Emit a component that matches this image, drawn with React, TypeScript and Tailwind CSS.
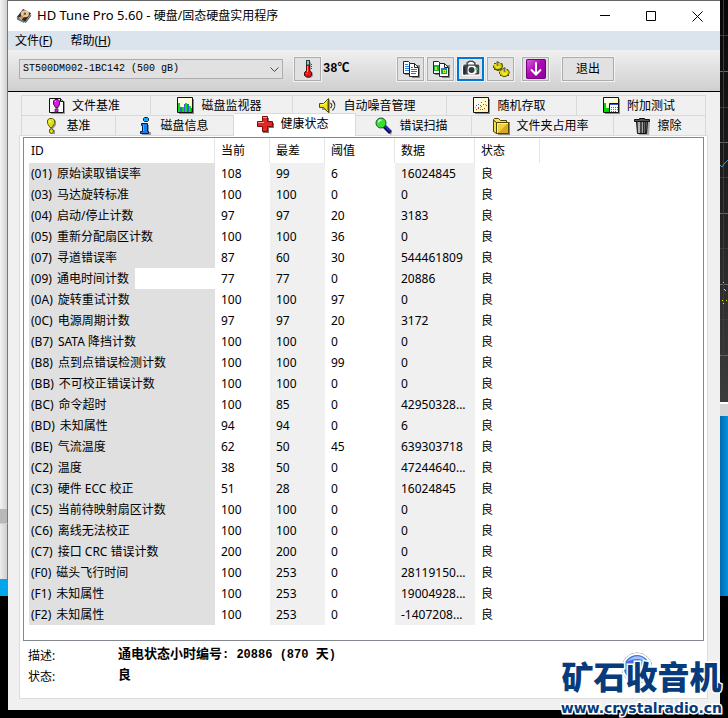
import type { ReactNode } from 'react';
import clsx from 'clsx';

type Attribute = {
  id: string;
  name: string;
  current: number;
  worst: number;
  threshold: number;
  data: string;
};

const attributes: Attribute[] = [
  { id: '01', name: '原始读取错误率', current: 108, worst: 99, threshold: 6, data: '16024845' },
  { id: '03', name: '马达旋转标准', current: 100, worst: 100, threshold: 0, data: '0' },
  { id: '04', name: '启动/停止计数', current: 97, worst: 97, threshold: 20, data: '3183' },
  { id: '05', name: '重新分配扇区计数', current: 100, worst: 100, threshold: 36, data: '0' },
  { id: '07', name: '寻道错误率', current: 87, worst: 60, threshold: 30, data: '544461809' },
  { id: '09', name: '通电时间计数', current: 77, worst: 77, threshold: 0, data: '20886' },
  { id: '0A', name: '旋转重试计数', current: 100, worst: 100, threshold: 97, data: '0' },
  { id: '0C', name: '电源周期计数', current: 97, worst: 97, threshold: 20, data: '3172' },
  { id: 'B7', name: 'SATA 降挡计数', current: 100, worst: 100, threshold: 0, data: '0' },
  { id: 'B8', name: '点到点错误检测计数', current: 100, worst: 100, threshold: 99, data: '0' },
  { id: 'BB', name: '不可校正错误计数', current: 100, worst: 100, threshold: 0, data: '0' },
  { id: 'BC', name: '命令超时', current: 100, worst: 85, threshold: 0, data: '42950328...' },
  { id: 'BD', name: '未知属性', current: 94, worst: 94, threshold: 0, data: '6' },
  { id: 'BE', name: '气流温度', current: 62, worst: 50, threshold: 45, data: '639303718' },
  { id: 'C2', name: '温度', current: 38, worst: 50, threshold: 0, data: '47244640...' },
  { id: 'C3', name: '硬件 ECC 校正', current: 51, worst: 28, threshold: 0, data: '16024845' },
  { id: 'C5', name: '当前待映射扇区计数', current: 100, worst: 100, threshold: 0, data: '0' },
  { id: 'C6', name: '离线无法校正', current: 100, worst: 100, threshold: 0, data: '0' },
  { id: 'C7', name: '接口 CRC 错误计数', current: 200, worst: 200, threshold: 0, data: '0' },
  { id: 'F0', name: '磁头飞行时间', current: 100, worst: 253, threshold: 0, data: '28119150...' },
  { id: 'F1', name: '未知属性', current: 100, worst: 253, threshold: 0, data: '19004928...' },
  { id: 'F2', name: '未知属性', current: 100, worst: 253, threshold: 0, data: '-1407208...' },
];

const selectedId = '09';

const Icon = ({ children, size = 18 }: { children: ReactNode; size?: number }) => (
  <svg width={size} height={size} viewBox="0 0 18 18" className="shrink-0" aria-hidden="true">
    {children}
  </svg>
);

const DiskIcon = () => (
  <Icon size={16}>
    <path d="M1 10 8 1l9 5-7 10z" fill="#2c2a28" />
    <path d="M1 10v3l8 4 1-2z" fill="#777" />
    <path d="m10 16 7-9v2l-6 8z" fill="#555" />
    <ellipse cx="10" cy="6.5" rx="4.6" ry="4" fill="#e5c79b" />
    <circle cx="10" cy="6.5" r="1.4" fill="#80532a" />
    <path d="m4 10 5-2-3 5z" fill="#e78b23" />
    <path d="m3 10 3 3 3-4" stroke="#ddd" fill="none" />
  </Icon>
);

const ThermometerIcon = () => (
  <Icon>
    <path d="M8 2h4v9l2 2v3l-2 2H8z" fill="#999" />
    <path d="M7.500.5h3v10l2 2v3l-2 1.500h-3l-2-1.500v-3l2-2z" fill="#e81212" stroke="#3a1010" />
    <path d="M7.500.5h3V5h-3z" fill="#5fd9e9" stroke="#333" />
    <path d="M8.500 6v6M7.500 13.500h1" stroke="#ff8d82" />
    <path d="M12 4.500h1M12 6.500h1M12 8.500h1" stroke="#444" />
  </Icon>
);

const CopyTextIcon = () => (
  <Icon>
    <path d="M3 3h6v12H3zM10 5h8v13h-8z" fill="#888" />
    <path d="M1.500 1.500h5l2 2v10h-7z" fill="#fff" stroke="#222" />
    <path d="M3 4.500h3M3 6.500h4M3 8.500h4M3 10.500h4" stroke="#2f80dc" />
    <path d="M7.500 3.500h5l4 4v9h-9z" fill="#fff" stroke="#222" />
    <path d="M12.500 3.500v4h4" fill="none" stroke="#222" />
    <path d="M9 7.500h2M9 9.500h6M9 11.500h6M9 13.500h5" stroke="#2374da" />
  </Icon>
);

const CopyImageIcon = () => (
  <Icon>
    <path d="M3 3h6v12H3zM10 5h8v13h-8z" fill="#888" />
    <path d="M1.500 1.500h5l2 2v10h-7z" fill="#fff" stroke="#222" />
    <path d="M2 5h5v6H2z" fill="#18b33a" />
    <path d="M3 7h2v3H3z" fill="#d9df20" />
    <path d="M7.500 3.500h5l4 4v9h-9z" fill="#fff" stroke="#222" />
    <path d="M12.500 3.500v4h4" fill="none" stroke="#222" />
    <path d="M9 8h6v6H9z" fill="#10a936" />
    <path d="M9 8h6v1H9z" fill="#2d7bd2" />
    <path d="M11 10h3v3h-3z" fill="#dce222" />
    <path d="M12 11h1v1h-1z" fill="#e84b20" />
  </Icon>
);

const CameraIcon = () => (
  <Icon size={20}>
    <path d="m1 5 4-1 2-3h5l2 3 3 1v10H1z" fill="#fff" />
    <path d="M5.500 5.500V3.500l2-1.500h3l2 1.500v2" fill="none" stroke="#495159" strokeWidth="1.500" />
    <rect x="2" y="5" width="14.500" height="9" rx="1" fill="#41494f" />
    <path d="M2 7h2v7H2z" fill="#23292e" />
    <path d="M7 6h5l2 2v4l-2 2H7l-1-2V8z" fill="#fff" />
    <circle cx="9.500" cy="10" r="2.700" fill="#333b42" />
    <path d="M13 8h2v2h-2z" fill="#20df36" />
  </Icon>
);

const GearsIcon = () => (
  <Icon>
    <path d="m1 6 1-1V3h2l1-1h2l1 1h2l1 2v2l-1 1v2H8l-1 1H5l-1-1H2V8H1z" fill="#5b5700" />
    <path d="M2 4h2V3h4l1 1 1 2-1 2-2 1H4L2 7z" fill="#d4cd0b" />
    <path d="m7 12 1-1V9h2l1-1h2l1 1h2l1 2 1 1-1 2v2h-2l-1 1h-3l-1-1H8v-2H7z" fill="#5b5700" />
    <path d="m8 11 2-1 1-1h3l2 2 1 1-1 2-2 2h-3l-3-2z" fill="#ded814" />
    <path d="M5.500 1v5M12.500 7v5" stroke="#77756b" strokeWidth="1.600" />
    <path d="M3 5h1M4 7h4M10 12h1M11 14h4" stroke="#fff66f" />
  </Icon>
);

const SaveIcon = () => (
  <Icon size={20}>
    <defs>
      <linearGradient id="save" x1="0" y1="0" x2="1" y2="1">
        <stop offset="0" stopColor="#d86adf" />
        <stop offset=".45" stopColor="#ae08b5" />
        <stop offset="1" stopColor="#8d0098" />
      </linearGradient>
    </defs>
    <rect x=".5" y=".5" width="17" height="17" rx="1" fill="url(#save)" stroke="#760080" />
    <path d="M9 3v11M4.500 9.500 9 14l4.500-4.500" fill="none" stroke="#fff" strokeWidth="1.800" />
  </Icon>
);

const FileBenchmarkIcon = () => (
  <Icon>
    <path d="M3 4h13l1 1v12H3z" fill="#999" />
    <path d="M1.500 1.500h11l3 3v11h-14z" fill="#f8f8f8" stroke="#111" />
    <path d="M12.500 1.500v3h3" fill="#bbb" stroke="#111" />
    <path d="M7 4h5v4l-2 4H8z" fill="#999" />
    <path d="M5.500 4 7 2.500h3L11.500 4v3L9.500 10.500h-2L5.500 7z" fill="#d81be2" stroke="#4b0f50" />
    <path d="M7 4.500h1" stroke="#ffb9ff" />
    <path d="M7 12h3v3H7z" fill="#d81be2" stroke="#4b0f50" strokeWidth=".7" />
  </Icon>
);

const MonitorIcon = () => (
  <Icon>
    <defs>
      <linearGradient id="paper" x1="0" y1="0" x2="1" y2="1">
        <stop offset="0" stopColor="#fff" />
        <stop offset="1" stopColor="#fff9a0" />
      </linearGradient>
    </defs>
    <path d="M2 2h15v15H2z" fill="#888" />
    <path d="M.5.5h15v15H.5z" fill="url(#paper)" stroke="#111" />
    <path d="M1 6h2v9H1zM5 10h2v5H5zM8 6h2v9H8zM12 9h2v6h-2z" fill="#08df08" />
    <path d="M3 10h2v5H3zM7 7h1v8H7zM10 7h2v8h-2zM14 11h1v4h-1z" fill="#3c5ae8" />
  </Icon>
);

const SpeakerIcon = () => (
  <Icon>
    <path d="M3 7h3l5-5v15l-5-4H3z" fill="#999" />
    <path d="M.5 6.500h4l5-5v14l-5-5h-4z" fill="#f4e313" stroke="#554d00" />
    <path d="M2 7.500h3l3-3" stroke="#fff9a8" fill="none" />
    <path d="M8.500 4v9" stroke="#ac9c00" />
    <path d="M11.500 6c2 2 2 3 0 5M13.500 3.500c3 3 3 7 0 10" fill="none" stroke="#333" strokeWidth="1.200" />
  </Icon>
);

const RandomIcon = () => (
  <Icon>
    <path d="M2 2h15v15H2z" fill="#888" />
    <path d="M.5.5h15v15H.5z" fill="url(#paper)" stroke="#111" />
    <path d="M3 8h1v1H3zm2-1h1v1H5zm2 1h1v1H7zm1-3h1v1H8zm2 2h1v1h-1zm2-3h1v1h-1zm-7 6h1v1H5z" fill="#3459e8" />
    <path d="M3 12h1v1H3zm2-1h1v1H5zm2 1h1v1H7zm1-3h1v1H8zm3 2h1v1h-1zm2-3h1v1h-1zM9 12h1v1H9z" fill="#ed3030" />
    <path d="M2 10h1v1H2zm5 0h1v1H7zm5-3h1v1h-1z" fill="#edae20" />
  </Icon>
);

const ExtraIcon = () => (
  <Icon>
    <path d="M2 2h15v15H2z" fill="#888" />
    <path d="M.5.5h15v15H.5z" fill="url(#paper)" stroke="#111" />
    <path d="M1 6h2v9H1zM3 11h3v4H3z" fill="#00d400" />
    <path d="M6.500 6.500h9v9h-9z" fill="#fff" stroke="#111" />
    <path d="M7 7h8v1H7z" fill="#355be0" />
    <path d="M8 10h1v1H8zm2 0h1v1h-1zm2 0h1v1h-1zm-4 2h1v1H8zm4 0h1v1h-1zm2 0h1v1h-1zm-4 2h1v1h-1zm2 0h1v1h-1z" fill="#e03044" />
    <path d="M10 12h1v1h-1zm4-2h1v1h-1zm-6 4h1v1H8z" fill="#4059dc" />
  </Icon>
);

const BenchmarkIcon = () => (
  <Icon>
    <path d="m8 3 4-1 2 2v4l-3 4H8zM9 13h4v4H8z" fill="#999" />
    <path d="m5.500 3 2-1.500h3l2 1.500v3.500l-2.500 4H8L5.500 6.500z" fill="#dce014" stroke="#5f6000" />
    <path d="m7.500 12.500 2-.5 2 1v2l-2 1.500-2-1z" fill="#dce014" stroke="#5f6000" />
    <path d="M7 4.500h2" stroke="#ffffb5" strokeWidth="1.500" />
  </Icon>
);

const InfoIcon = () => (
  <Icon>
    <path d="M7 8h6v7h2v3H6v-2h2z" fill="#999" />
    <path d="M5.500 6.500h6v8h1v2h-8v-2h2v-6h-1z" fill="#1480ef" stroke="#061e46" />
    <path d="m7.500 1.500 1-1h3l1 1v2l-1 1h-3l-1-1z" fill="#1aa9f0" stroke="#061e46" />
    <path d="M7.500 8v6" stroke="#42b4ff" />
  </Icon>
);

const HealthIcon = () => (
  <Icon>
    <path d="M7 3h6v5h5v5h-5v5H7z" fill="#777" />
    <path d="M6.500 1.500h5v5h5v5h-5v5h-5v-5h-5v-5h5z" fill="#df2927" stroke="#7d0909" />
    <path d="M7 2.500h4M2 7.500h6" stroke="#ff9b8e" />
  </Icon>
);

const ScanIcon = () => (
  <Icon>
    <path d="m10 9 7 6-1 3-7-7z" fill="#888" />
    <path d="m9 9 6.500 6.500" stroke="#061052" strokeWidth="4" />
    <path d="m10 9 5 5" stroke="#2529cf" strokeWidth="1.800" />
    <circle cx="6" cy="6" r="5" fill="#36df32" stroke="#185c28" />
    <path d="M3.500 5.500c0-2 1.500-2.500 3-2.500" fill="none" stroke="#c7ffc2" strokeWidth="1.500" />
  </Icon>
);

const FolderIcon = () => (
  <Icon>
    <path d="M6 5h12v13H6z" fill="#888" />
    <path d="M1.500 14.500v-12l1-1h4l2 2h6v3" fill="#f5e563" stroke="#4e4300" />
    <path d="m1.500 3 3 2.500v11l-3-2z" fill="#f2df4e" stroke="#4e4300" />
    <path d="M4.500 5.500h12v11h-12z" fill="#d9ac1d" stroke="#4e4300" />
    <path d="M6 7h9l-8 8H6z" fill="#f0d143" />
    <path d="M5 6.500h11M5.500 7v9" stroke="#fff18d" />
  </Icon>
);

const TrashIcon = () => (
  <Icon>
    <path d="M5 5h12l-1 13H6z" fill="#aaa" />
    <path d="M3.500 4.500h11l-1 12h-9z" fill="#666" stroke="#111" />
    <path d="M6 5v11" stroke="#ccc" strokeWidth="1.500" />
    <path d="M8 5v11M10.500 5v11M12.500 5v11" stroke="#292929" />
    <path d="M9.500 5v11" stroke="#aaa" />
    <path d="M1.500 4.500v-2h5v-1h5v1h5v2z" fill="#555" stroke="#111" />
  </Icon>
);

const fileTabs = [
  { label: '文件基准', icon: FileBenchmarkIcon },
  { label: '磁盘监视器', icon: MonitorIcon },
  { label: '自动噪音管理', icon: SpeakerIcon },
  { label: '随机存取', icon: RandomIcon },
  { label: '附加测试', icon: ExtraIcon },
];

const mainTabs = [
  { label: '基准', icon: BenchmarkIcon },
  { label: '磁盘信息', icon: InfoIcon },
  { label: '健康状态', icon: HealthIcon, active: true },
  { label: '错误扫描', icon: ScanIcon },
  { label: '文件夹占用率', icon: FolderIcon },
  { label: '擦除', icon: TrashIcon },
];

const Tab = ({ label, icon: TabIcon, active }: { label: string; icon: () => ReactNode; active?: boolean }) => (
  <button
    type="button"
    role="tab"
    aria-selected={!!active}
    className={clsx(
      'flex items-center justify-center gap-1.5 border-t border-r border-[#d9d9d9] pr-1 whitespace-nowrap',
      active ? 'relative -mt-0.5 -mb-px bg-white pb-0.5' : 'bg-[#f0f0f0]',
    )}
  >
    <TabIcon />
    {label}
  </button>
);

const ToolButton = ({ label, active, children }: { label: string; active?: boolean; children: ReactNode }) => (
  <button
    type="button"
    aria-label={label}
    className={clsx(
      'flex h-6 w-[27px] items-center justify-center bg-[#e1e1e1] outline outline-[#f2f2f2]',
      active ? 'border-2 border-[#0078d7]' : 'border border-[#adadad]',
    )}
  >
    {children}
  </button>
);

const TitleBar = () => (
  <header className="flex h-[30px] items-center bg-white pl-2">
    <DiskIcon />
    <h1 className="ml-[5px] flex-1">
      <span className="text-[13px]">HD Tune Pro 5.60 - </span>
      硬盘/固态硬盘实用程序
    </h1>
    <button type="button" aria-label="最小化" className="flex w-[46px] justify-center">
      <svg width="11" height="11" viewBox="0 0 11 11" stroke="#000" fill="none"><path d="M0 4.500h10" /></svg>
    </button>
    <button type="button" aria-label="最大化" className="flex w-[46px] justify-center">
      <svg width="11" height="11" viewBox="0 0 11 11" stroke="#000" fill="none"><path d="M.5.5h9v9h-9z" /></svg>
    </button>
    <button type="button" aria-label="关闭" className="flex w-[46px] justify-center">
      <svg width="11" height="11" viewBox="0 0 11 11" stroke="#000" fill="none"><path d="m.5.5 10 10m0-10-10 10" /></svg>
    </button>
  </header>
);

const Toolbar = () => (
  <div className="flex h-[42px] items-center border-b border-black bg-linear-to-b from-[#f0f0f0] to-[#cfcfcf] pr-3 pb-1 pl-[11px]">
    <div className="relative w-[264px]">
      <select
        aria-label="硬盘"
        className="block h-5 w-full appearance-none border border-[#adadad] bg-[#e1e1e1] px-[3px] font-['Liberation_Mono',monospace] text-[10px] leading-4"
      >
        <option>ST500DM002-1BC142 (500 gB)</option>
      </select>
      <svg width="9" height="6" viewBox="0 0 9 6" className="pointer-events-none absolute top-2 right-1" fill="none" stroke="#444">
        <path d="m.5.5 4 4 4-4" />
      </svg>
    </div>
    <div className="ml-[11px] flex w-[103px] items-center gap-0.5">
      <ToolButton label="温度"><ThermometerIcon /></ToolButton>
      <span className="font-['Liberation_Mono','Noto_Sans_CJK_SC',monospace] font-bold">38℃</span>
    </div>
    <div className="flex gap-[3px]">
      <ToolButton label="复制文本"><CopyTextIcon /></ToolButton>
      <ToolButton label="复制图像"><CopyImageIcon /></ToolButton>
      <ToolButton label="截图" active><CameraIcon /></ToolButton>
      <ToolButton label="选项"><GearsIcon /></ToolButton>
    </div>
    <div className="ml-2 flex gap-[13px]">
      <ToolButton label="保存"><SaveIcon /></ToolButton>
      <button type="button" className="h-6 w-[52px] border border-[#adadad] bg-[#e1e1e1] outline outline-[#f2f2f2]">
        退出
      </button>
    </div>
  </div>
);

const HealthTable = () => (
  <div className="flex-1 border border-[#828790] bg-white pl-[5px]">
    <table className="w-full table-fixed border-collapse text-left">
      <colgroup>
        <col className="w-[186px]" />
        <col className="w-[55px]" />
        <col className="w-[55px]" />
        <col className="w-[70px]" />
        <col className="w-[80px]" />
        <col className="w-[65px]" />
        <col />
      </colgroup>
      <thead>
        <tr className="h-[25px]">
          {['ID', '当前', '最差', '阈值', '数据', '状态'].map((title) => (
            <th
              key={title}
              scope="col"
              className="bg-linear-to-r from-[#e5e5e5] to-[#e5e5e5] bg-[length:1px_100%] bg-right bg-no-repeat p-0 pl-1.5 font-normal first:pl-0.5"
            >
              {title}
            </th>
          ))}
          <td />
        </tr>
      </thead>
      <tbody>
        {attributes.map((attr) => (
          <tr key={attr.id} className="h-[21px] leading-[21px] whitespace-nowrap">
            <td className={clsx('p-0', attr.id !== selectedId && 'bg-[#e0e0e0]')}>
              <span className="inline-flex gap-[5px] bg-[#e0e0e0] pr-1.5 pl-0.5 align-top">
                <span>({attr.id})</span>
                <span>{attr.name}</span>
              </span>
            </td>
            <td className="p-0 pl-1.5">{attr.current}</td>
            <td className="bg-[#f0f0f0] p-0 pl-1.5">{attr.worst}</td>
            <td className="p-0 pl-1.5">{attr.threshold}</td>
            <td className="bg-[#f0f0f0] p-0 pl-1.5">{attr.data}</td>
            <td className="p-0 pl-1.5">良</td>
            <td />
          </tr>
        ))}
      </tbody>
    </table>
  </div>
);

const Description = () => (
  <dl className="grid grid-cols-[90px_1fr] pt-1 pb-[11px] pl-[5px]">
    <dt className="leading-[21px]">描述:</dt>
    <dd className="text-[13px] leading-4 font-bold">
      通电状态小时编号
      <span className="font-['Liberation_Mono',monospace] text-xs whitespace-pre">: 20886 (870 </span>
      天
      <span className="font-['Liberation_Mono',monospace] text-xs">)</span>
    </dd>
    <dt className="leading-[21px]">状态:</dt>
    <dd className="text-[13px] leading-4 font-bold">良</dd>
  </dl>
);

// Other windows on the desktop, visible on both sides of the main one
const LeftBackdrop = () => (
  <div className="flex w-2 shrink-0 flex-col">
    <div className="h-[509px] border-r border-[#777] bg-linear-to-r from-[#f4f4f4] to-[#d2d2d2]" />
    <div className="h-[15px] border-r border-b border-[#777] border-b-[#ccc] bg-[#b8b8b8]" />
    <div className="h-[55px] border-r border-[#777] bg-linear-to-r from-[#ececec] to-[#cfcfcf]" />
    <div className="h-[17px] bg-[#00a5ee]" />
  </div>
);

const RightBackdrop = () => (
  <div className="flex w-2 shrink-0 flex-col">
    <svg width="8" height="402" viewBox="0 0 8 402" aria-hidden="true">
      <defs>
        <linearGradient id="scope" x1="0" y1="0" x2="0" y2="1">
          <stop offset="0" stopColor="#060606" />
          <stop offset="1" stopColor="#3c3c3c" />
        </linearGradient>
      </defs>
      <path d="M0 0h8v402H0z" fill="url(#scope)" />
      <path d="M0 71.500h8M0 142.500h8M0 213.500h8M0 284.500h8M0 355.500h8" stroke="#666" />
      <path d="M0 35.500h8M0 107.500h8M0 177.500h8M0 248.500h8M0 319.500h8M0 390.500h8M3.500 0v402" stroke="#3b3b3b" />
      <path d="m0 165 2 2 2-3 4-4" fill="none" stroke="#1da9df" />
      <path d="M3 282h1v1H3zm1 7h1v1H4zm1 1h1v1H5zm-3 10h1v1H2zm4 0h1v1H6zm-3 3h1v1H3z" fill="#e8e800" />
    </svg>
    <div className="h-[14px] border-t-2 border-white bg-[#d5d5d5]" />
    <div className="h-[180px] bg-linear-to-r from-[#0069ae] to-[#0094e5]" />
  </div>
);

const Watermark = () => (
  <div className="pointer-events-none absolute right-1.5 bottom-0.5 text-center text-[#073b7b] [paint-order:stroke] [-webkit-text-stroke:3px_white]">
    <svg width="32" height="32" viewBox="0 0 32 32" className="absolute -top-0.5 left-[60px]" aria-hidden="true">
      <circle cx="16" cy="16" r="15" fill="#fff" stroke="#777" />
      <circle cx="16" cy="16" r="13" fill="#3f6fdb" />
      <path d="M6 10c5-7 15-8 20 0-6-4-14-4-20 0z" fill="#a6c3fa" />
    </svg>
    <p className="relative text-[32px] leading-[46px] font-black">矿石收音机</p>
    <p className="relative font-['DejaVu_Sans',sans-serif] text-sm leading-4 font-bold">www.crystalradio.cn</p>
  </div>
);

export default function App() {
  return (
    <div className="relative flex min-h-screen bg-black font-['Noto_Sans','Noto_Sans_CJK_SC',sans-serif] text-xs text-black" lang="zh-CN">
      <LeftBackdrop />
      <div className="mb-2 flex min-w-0 flex-1 flex-col border-t border-[#666] bg-[#f0f0f0]">
        <TitleBar />
        <nav className="flex h-[19px] items-center gap-[18px] bg-[#dbe3ec] pl-[7px]">
          <button type="button">文件(<u>F</u>)</button>
          <button type="button">帮助(<u>H</u>)</button>
        </nav>
        <Toolbar />
        <main className="flex flex-1 flex-col pt-[3px] pr-3 pb-[11px] pl-[11px]">
          <div role="tablist" className="mx-0.5 border-l border-[#d9d9d9]">
            <div className="grid h-5 grid-cols-[129fr_142fr_154fr_130fr_129fr]">
              {fileTabs.map((tab) => (
                <Tab key={tab.label} {...tab} />
              ))}
            </div>
            <div className="grid h-5 grid-cols-[94fr_118fr_122fr_116fr_142fr_92fr]">
              {mainTabs.map((tab) => (
                <Tab key={tab.label} {...tab} />
              ))}
            </div>
          </div>
          <section className="flex flex-1 flex-col border border-[#dcdcdc] bg-white px-[3px] pt-px">
            <HealthTable />
            <Description />
          </section>
        </main>
      </div>
      <RightBackdrop />
      <Watermark />
    </div>
  );
}
